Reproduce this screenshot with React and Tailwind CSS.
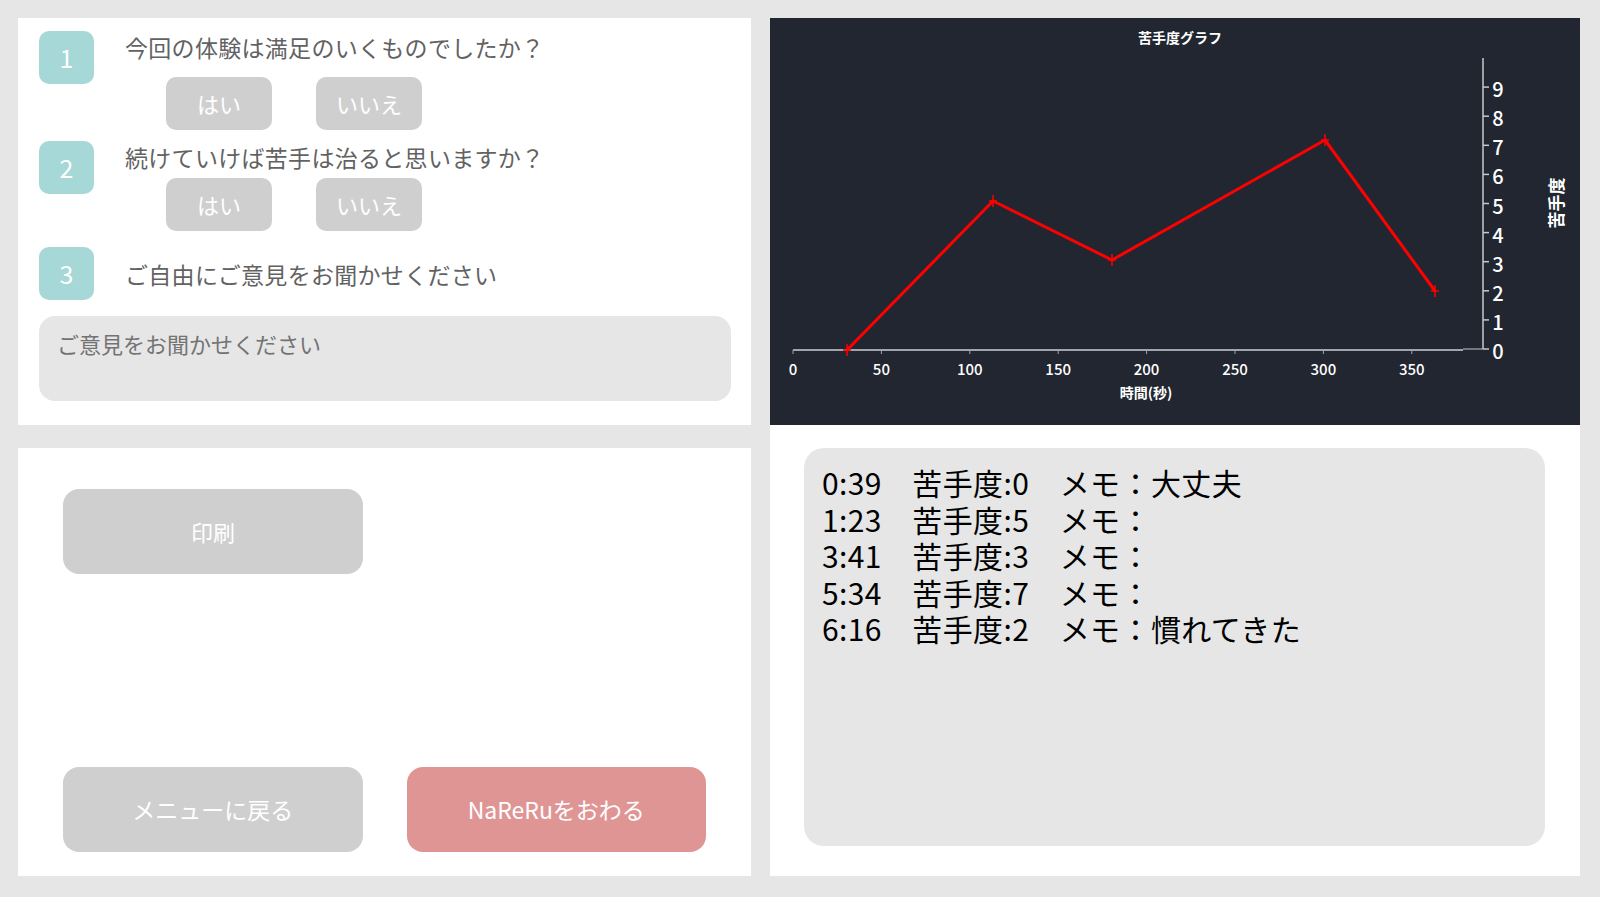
import React from "react";

const jp = { fontFamily: '"Noto Sans CJK JP", "Noto Sans", sans-serif' };

const points = [
  [77, 332],
  [223, 183],
  [342, 242],
  [555, 122],
  [665, 273],
];

const records = [
  { t: "0:39", level: 0, memo: "大丈夫" },
  { t: "1:23", level: 5, memo: "" },
  { t: "3:41", level: 3, memo: "" },
  { t: "5:34", level: 7, memo: "" },
  { t: "6:16", level: 2, memo: "慣れてきた" },
];

function Badge({ n }) {
  return (
    <div className="w-[55px] h-[53px] shrink-0 rounded-[10px] bg-[#a6d8d8] text-white text-[25px] flex items-center justify-center">
      {n}
    </div>
  );
}

function YesNo() {
  return (
    <div className="flex gap-[44px] ml-[41px]">
      <button className="w-[106px] h-[53px] rounded-[10px] bg-[#d0cfd0] text-white text-[22px]">はい</button>
      <button className="w-[106px] h-[53px] rounded-[10px] bg-[#d0cfd0] text-white text-[22px]">いいえ</button>
    </div>
  );
}

function Chart() {
  const d = points.map((p, i) => (i === 0 ? "M" : "L") + p[0] + " " + p[1]).join(" ");
  return (
    <svg width="810" height="407" viewBox="0 0 810 407" style={jp}>
      <text x="410" y="25" fill="#fff" fontSize="14" fontWeight="700" textAnchor="middle">苦手度グラフ</text>
      {/* x axis */}
      <line x1="23" y1="332" x2="693" y2="332" stroke="#a3a3ab" strokeWidth="2" />
      <line x1="693" y1="331" x2="713" y2="331" stroke="#c8c8cc" strokeWidth="1" />
      {[0, 50, 100, 150, 200, 250, 300, 350].map((v, i) => {
        const x = 23 + i * 88.4;
        return (
          <g key={v}>
            <line x1={x} y1="332" x2={x} y2="336" stroke="#a3a3ab" strokeWidth="1" />
            <text x={x} y="357" fill="#fff" fontSize="15" fontWeight="500" textAnchor="middle">{v}</text>
          </g>
        );
      })}
      <text x="376" y="380" fill="#fff" fontSize="14" fontWeight="700" textAnchor="middle">時間(秒)</text>
      {/* y axis */}
      <line x1="713" y1="40" x2="713" y2="331" stroke="#c8c8cc" strokeWidth="1.5" />
      {[0, 1, 2, 3, 4, 5, 6, 7, 8, 9].map((v) => {
        const y = 331 - v * 29.1;
        return (
          <g key={v}>
            <line x1="713" y1={y} x2="719" y2={y} stroke="#c8c8cc" strokeWidth="1.5" />
            <text x="728" y={y + 10} fill="#fff" fontSize="20" fontWeight="500" textAnchor="middle">{v}</text>
          </g>
        );
      })}
      <text
        x="788"
        y="185"
        fill="#fff"
        fontSize="17"
        fontWeight="700"
        textAnchor="middle"
        dominantBaseline="middle"
        transform="rotate(-90 788 185)"
      >
        苦手度
      </text>
      <path d={d} fill="none" stroke="#ff0000" strokeWidth="3" strokeLinejoin="round" />
      {points.map(([x, y], i) => (
        <g key={i} stroke="#ff0000" strokeWidth="1.5">
          <line x1={x - 4} y1={y} x2={x + 4} y2={y} />
          <line x1={x} y1={y - 6} x2={x} y2={y + 6} />
        </g>
      ))}
    </svg>
  );
}

export default function App() {
  return (
    <div
      className="w-[1600px] h-[897px] bg-[#e6e6e6] flex gap-[19px] pt-[18px] pl-[18px] pr-[20px] pb-[21px]"
      style={jp}
    >
      {/* left column */}
      <div className="w-[733px] flex flex-col gap-[23px]">
        <div className="h-[407px] bg-white pl-[21px] pr-[20px] pt-[13px] flex flex-col">
          <div className="flex gap-[31px]">
            <Badge n="1" />
            <div className="flex flex-col">
              <div className="text-[23px] leading-[32px] text-[#626262] tracking-[0.3px]">今回の体験は満足のいくものでしたか？</div>
              <div className="mt-[14px]">
                <YesNo />
              </div>
            </div>
          </div>
          <div className="flex gap-[31px] mt-[11px]">
            <Badge n="2" />
            <div className="flex flex-col">
              <div className="text-[23px] leading-[32px] text-[#626262] tracking-[0.3px]">続けていけば苦手は治ると思いますか？</div>
              <div className="mt-[5px]">
                <YesNo />
              </div>
            </div>
          </div>
          <div className="flex gap-[31px] mt-[16px] items-center">
            <Badge n="3" />
            <div className="text-[23px] leading-[32px] text-[#626262] tracking-[0.3px]">ご自由にご意見をお聞かせください</div>
          </div>
          <textarea
            className="mt-[16px] w-[692px] h-[85px] rounded-[16px] bg-[#e6e6e6] px-[18px] pt-[11px] text-[22px] leading-[32px] text-[#555] placeholder:text-[#737373] resize-none outline-none"
            placeholder="ご意見をお聞かせください"
          />
        </div>
        <div className="flex-1 bg-white px-[45px] pt-[41px] pb-[24px] flex flex-col justify-between">
          <button className="w-[300px] h-[85px] rounded-[16px] bg-[#d0cfd0] text-white text-[22px]">印刷</button>
          <div className="flex gap-[44px]">
            <button className="w-[300px] h-[85px] rounded-[16px] bg-[#d0cfd0] text-white text-[23px]">メニューに戻る</button>
            <button className="w-[300px] h-[85px] rounded-[16px] bg-[#e09595] text-white text-[23px]">NaReRuをおわる</button>
          </div>
        </div>
      </div>

      {/* right column */}
      <div className="w-[810px] bg-white flex flex-col">
        <div className="h-[407px] bg-[#212631]">
          <Chart />
        </div>
        <div className="ml-[34px] mt-[23px] w-[741px] h-[398px] rounded-[20px] bg-[#e6e6e6] pl-[18px] pt-[16px]">
          {records.map((r) => (
            <div key={r.t} className="text-[30px] leading-[36px] h-[36.5px] text-black whitespace-pre tracking-[0.4px]">
              {r.t + "\u3000" + "苦手度:" + r.level + "\u3000" + "メモ：" + r.memo}
            </div>
          ))}
        </div>
      </div>
    </div>
  );
}
